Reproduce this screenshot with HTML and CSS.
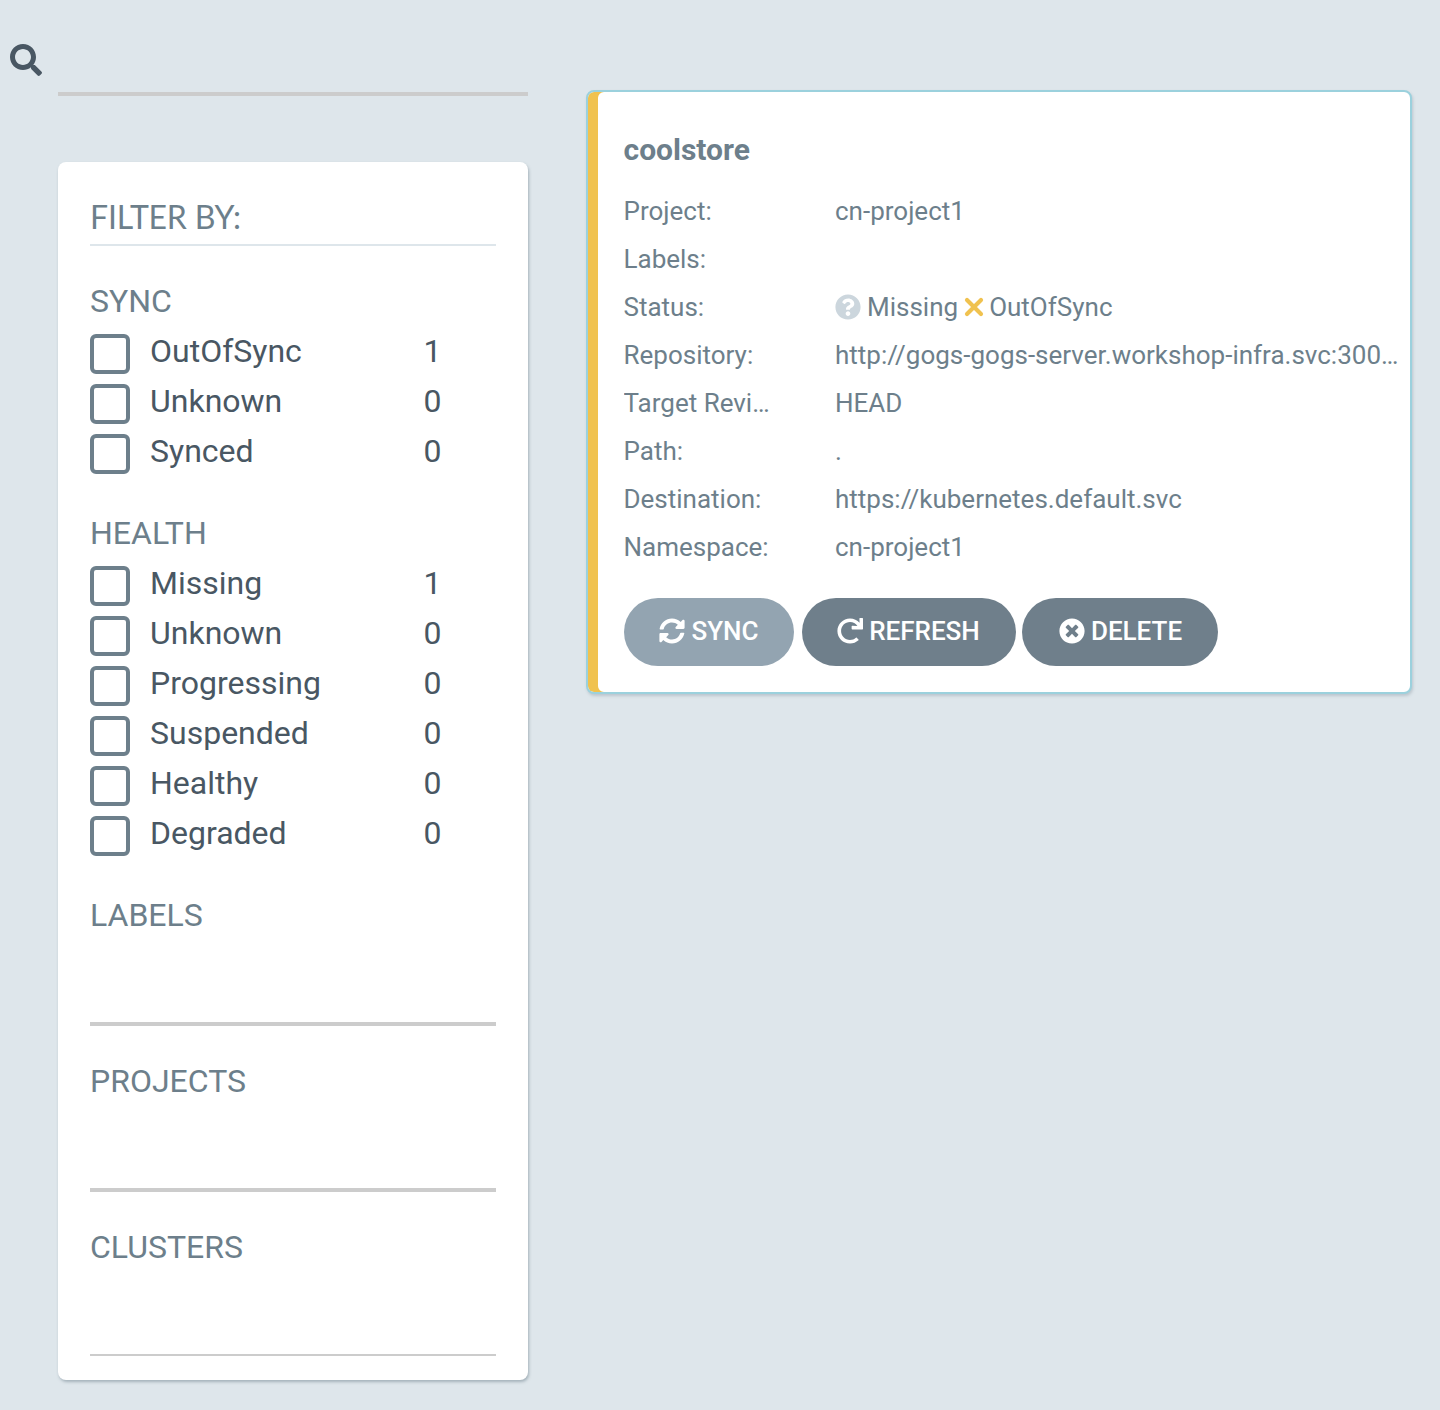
FILE: index.html
```html
<!DOCTYPE html>
<html lang="en">
<head>
  <meta charset="UTF-8">
  <title>Applications</title>
  <link rel="stylesheet" href="styles.css">
</head>
<body>
  <div class="page">
    <aside class="side">
      <div class="search">
        <svg class="search-icon" viewBox="0 0 512 512"><path d="M505 442.700L405.300 343c-4.500-4.500-10.600-7-17-7H372c27.600-35.300 44-79.700 44-128C416 93.100 322.900 0 208 0S0 93.100 0 208s93.100 208 208 208c48.300 0 92.700-16.400 128-44v16.300c0 6.400 2.500 12.500 7 17l99.700 99.700c9.400 9.400 24.600 9.400 33.900 0l28.300-28.300c9.400-9.400 9.400-24.600.1-34zM208 336c-70.700 0-128-57.200-128-128 0-70.700 57.200-128 128-128 70.700 0 128 57.200 128 128 0 70.700-57.200 128-128 128z"/></svg>
        <div class="search-line"></div>
      </div>
      <div class="filters">
        <div class="filters-title">FILTER BY:</div>

        <div class="group group-sync">
          <div class="group-name">SYNC</div>
          <div class="opt"><span class="box"></span><span class="opt-name">OutOfSync</span><span class="opt-num">1</span></div>
          <div class="opt"><span class="box"></span><span class="opt-name">Unknown</span><span class="opt-num">0</span></div>
          <div class="opt"><span class="box"></span><span class="opt-name">Synced</span><span class="opt-num">0</span></div>
        </div>

        <div class="group group-health">
          <div class="group-name">HEALTH</div>
          <div class="opt"><span class="box"></span><span class="opt-name">Missing</span><span class="opt-num">1</span></div>
          <div class="opt"><span class="box"></span><span class="opt-name">Unknown</span><span class="opt-num">0</span></div>
          <div class="opt"><span class="box"></span><span class="opt-name">Progressing</span><span class="opt-num">0</span></div>
          <div class="opt"><span class="box"></span><span class="opt-name">Suspended</span><span class="opt-num">0</span></div>
          <div class="opt"><span class="box"></span><span class="opt-name">Healthy</span><span class="opt-num">0</span></div>
          <div class="opt"><span class="box"></span><span class="opt-name">Degraded</span><span class="opt-num">0</span></div>
        </div>

        <div class="tags tags-labels">
          <div class="group-name">LABELS</div>
          <div class="tags-line"></div>
        </div>
        <div class="tags">
          <div class="group-name">PROJECTS</div>
          <div class="tags-line"></div>
        </div>
        <div class="tags">
          <div class="group-name">CLUSTERS</div>
          <div class="tags-line tags-line-thin"></div>
        </div>
      </div>
    </aside>

    <main class="app-card">
      <div class="app-title">coolstore</div>
      <div class="app-row"><span class="app-key">Project:</span><span class="app-val">cn-project1</span></div>
      <div class="app-row"><span class="app-key">Labels:</span><span class="app-val"></span></div>
      <div class="app-row">
        <span class="app-key">Status:</span>
        <span class="app-val status">
          <svg class="st-icon" viewBox="0 0 512 512"><path fill="#ccd6dd" d="M504 256c0 137-111 248-248 248S8 393 8 256 119 8 256 8s248 111 248 248zM262.700 90c-54.500 0-89.300 23-116.500 63.800-3.500 5.300-2.400 12.400 2.700 16.300l34.700 26.300c5.200 3.900 12.600 3 16.700-2.100 17.900-22.700 30.100-35.800 57.300-35.800 20.400 0 45.700 13.100 45.700 33 0 15-12.400 22.700-32.600 34-23.600 13.200-54.800 29.700-54.800 70.900V300c0 6.600 5.400 12 12 12h56c6.600 0 12-5.400 12-12v-1.300c0-28.600 83.500-29.800 83.500-107.200C379.400 133.200 318.900 90 262.700 90zM256 339c-25.500 0-46.200 20.700-46.200 46.200 0 25.500 20.700 46.200 46.200 46.200s46.200-20.700 46.200-46.200c0-25.500-20.700-46.200-46.200-46.200z"/></svg>
          <span>Missing</span>
          <svg class="st-x" viewBox="0 0 20 20"><path d="M3 3l14 14M17 3L3 17" fill="none" stroke="#f0c24f" stroke-width="4.200" stroke-linecap="round"/></svg>
          <span>OutOfSync</span>
        </span>
      </div>
      <div class="app-row"><span class="app-key">Repository:</span><span class="app-val clip">http://gogs-gogs-server.workshop-infra.svc:3000/user1/coolstore.git</span></div>
      <div class="app-row"><span class="app-key clip">Target Revision:</span><span class="app-val">HEAD</span></div>
      <div class="app-row"><span class="app-key">Path:</span><span class="app-val">.</span></div>
      <div class="app-row"><span class="app-key">Destination:</span><span class="app-val">https://kubernetes.default.svc</span></div>
      <div class="app-row"><span class="app-key">Namespace:</span><span class="app-val">cn-project1</span></div>

      <div class="actions">
        <button class="btn btn-sync">
          <svg class="btn-icon" viewBox="0 0 512 512"><path d="M370.720 133.280C339.458 104.008 298.888 87.962 255.848 88c-77.458.068-144.328 53.178-162.791 126.850-1.344 5.363-6.122 9.150-11.651 9.150H24.103c-7.498 0-13.194-6.807-11.807-14.176C33.933 94.924 134.813 8 256 8c66.448 0 126.791 26.136 171.315 68.685L463.030 40.970C478.149 25.851 504 36.559 504 57.941V192c0 13.255-10.745 24-24 24H345.941c-21.382 0-32.090-25.851-16.971-40.971l41.750-41.749zM32 296h134.059c21.382 0 32.090 25.851 16.971 40.971l-41.750 41.750c31.262 29.273 71.835 45.319 114.876 45.280 77.418-.070 144.315-53.144 162.787-126.849 1.344-5.363 6.122-9.150 11.651-9.150h57.304c7.498 0 13.194 6.807 11.807 14.176C478.067 417.076 377.187 504 256 504c-66.448 0-126.791-26.136-171.315-68.685L48.970 471.030C33.851 486.149 8 475.441 8 454.059V320c0-13.255 10.745-24 24-24z"/></svg>
          <span>SYNC</span>
        </button>
        <button class="btn btn-refresh">
          <svg class="btn-icon" viewBox="0 0 512 512"><path d="M500.333 0h-47.411c-6.853 0-12.314 5.729-11.986 12.574l4 82.759C399.416 41.899 331.672 8 256.001 8 119.341 8 7.899 119.526 8 256.187 8.101 393.068 119.096 504 256 504c63.926 0 122.202-24.187 166.178-63.908 5.113-4.618 5.354-12.561.482-17.433l-33.971-33.971c-4.466-4.466-11.640-4.717-16.380-.543C341.308 415.448 300.606 432 256 432c-97.267 0-176-78.716-176-176 0-97.267 78.716-176 176-176 60.892 0 114.506 30.858 146.099 77.787l-101.516-4.870c-6.845-.328-12.574 5.133-12.574 11.986v47.411c0 6.627 5.373 12 12 12h200.333c6.627 0 12-5.373 12-12V12c0-6.627-5.373-12-12-12z"/></svg>
          <span>REFRESH</span>
        </button>
        <button class="btn btn-delete">
          <svg class="btn-icon" viewBox="0 0 512 512"><path d="M256 8C119 8 8 119 8 256s111 248 248 248 248-111 248-248S393 8 256 8zm121.600 313.100c4.700 4.700 4.700 12.300 0 17L338 377.600c-4.700 4.700-12.300 4.700-17 0L256 312l-65.100 65.600c-4.700 4.700-12.300 4.700-17 0L134.400 338c-4.700-4.700-4.700-12.300 0-17l65.600-65-65.600-65.100c-4.700-4.700-4.700-12.300 0-17l39.600-39.600c4.700-4.700 12.300-4.700 17 0l65 65.700 65.100-65.600c4.700-4.700 12.300-4.700 17 0l39.600 39.600c4.700 4.700 4.700 12.300 0 17L312 256l65.600 65.100z"/></svg>
          <span>DELETE</span>
        </button>
      </div>
    </main>
  </div>
</body>
</html>
```

FILE: styles.css
```css
* {
  box-sizing: border-box;
}
body {
  margin: 0;
  background: #dee6eb;
  font-family: Roboto, "Liberation Sans", sans-serif;
  color: #6d7f8b;
}
.page {
  display: flex;
  align-items: flex-start;
  width: 1440px;
  height: 1410px;
  padding-left: 10px;
  overflow: hidden;
}

/* left column */
.side {
  width: 518px;
  flex: none;
}
.search {
  display: flex;
  align-items: flex-start;
  height: 162px;
  padding-top: 44px;
}
.search-icon {
  width: 32px;
  height: 32px;
  fill: #495763;
  flex: none;
}
.search-line {
  width: 470px;
  height: 4px;
  margin: 48px 0 0 16px;
  background: #ccc;
}
.filters {
  width: 470px;
  height: 1218px;
  margin-left: 48px;
  padding: 32px 32px 0;
  background: #fff;
  border-radius: 8px;
  box-shadow: 1px 2px 3px rgba(109, 127, 139, 0.5);
}
.filters-title {
  height: 52px;
  font-size: 32px;
  line-height: 46px;
  font-family: Lato, Roboto, sans-serif;
  letter-spacing: -0.2px;
  border-bottom: 2px solid #dee6eb;
}
.group-name {
  margin-bottom: 6px;
  font-size: 32px;
  line-height: 38px;
}
.group {
  padding-top: 36px;
}
.group-health {
  padding-top: 38px;
}
.opt {
  display: flex;
  align-items: center;
  height: 50px;
  font-size: 32px;
  color: #495763;
}
.box {
  width: 40px;
  height: 40px;
  margin-top: 5px;
  margin-right: 20px;
  border: 4px solid #6d7f8b;
  border-radius: 6px;
  flex: none;
}
.opt-name {
  width: 273.500px;
}
.tags {
  padding-top: 36px;
}
.tags-labels {
  padding-top: 38px;
}
.tags-line {
  height: 4px;
  margin-top: 88px;
  background: #ccc;
}
.tags-line-thin {
  height: 2px;
}

/* application tile */
.app-card {
  width: 826px;
  height: 604px;
  margin: 90px 0 0 58px;
  flex: none;
  padding: 39px 10px 0 35.500px;
  background: #fff;
  border: 2px solid #9bd1dd;
  border-radius: 8px;
  box-shadow: inset 10px 0 0 #f0c24f, 1px 2px 3px rgba(109, 127, 139, 0.3);
}
.app-title {
  height: 46px;
  margin-bottom: 10px;
  font-size: 30px;
  font-weight: 700;
  line-height: 38px;
}
.app-row {
  display: flex;
  align-items: center;
  height: 48px;
  font-size: 26px;
}
.app-key {
  width: 150px;
  margin-right: 61.500px;
  flex: none;
  white-space: nowrap;
}
.app-val {
  min-width: 0;
  flex: 1;
  white-space: nowrap;
}
.clip {
  overflow: hidden;
  text-overflow: ellipsis;
}
.status {
  display: flex;
  align-items: center;
}
.st-icon {
  width: 26px;
  height: 26px;
  margin-right: 6px;
}
.st-x {
  width: 20px;
  height: 20px;
  margin: 0 5px 0 6px;
}
.actions {
  display: flex;
  margin-top: 27px;
}
.btn {
  display: flex;
  align-items: center;
  justify-content: center;
  height: 68px;
  margin-right: 8px;
  padding-bottom: 4px;
  border: none;
  border-radius: 34px;
  color: #fff;
  background: #6f7f8b;
  font-family: Roboto, sans-serif;
  font-size: 26px;
  font-weight: 500;
}
.btn-icon {
  width: 26px;
  height: 26px;
  margin-right: 6px;
  fill: #fff;
}
.btn-sync {
  width: 170px;
  padding-left: 7px;
  background: #93a4b1;
}
.btn-refresh {
  width: 214px;
}
.btn-delete {
  width: 196px;
  margin-left: -2px;
  padding-left: 8px;
}
```
